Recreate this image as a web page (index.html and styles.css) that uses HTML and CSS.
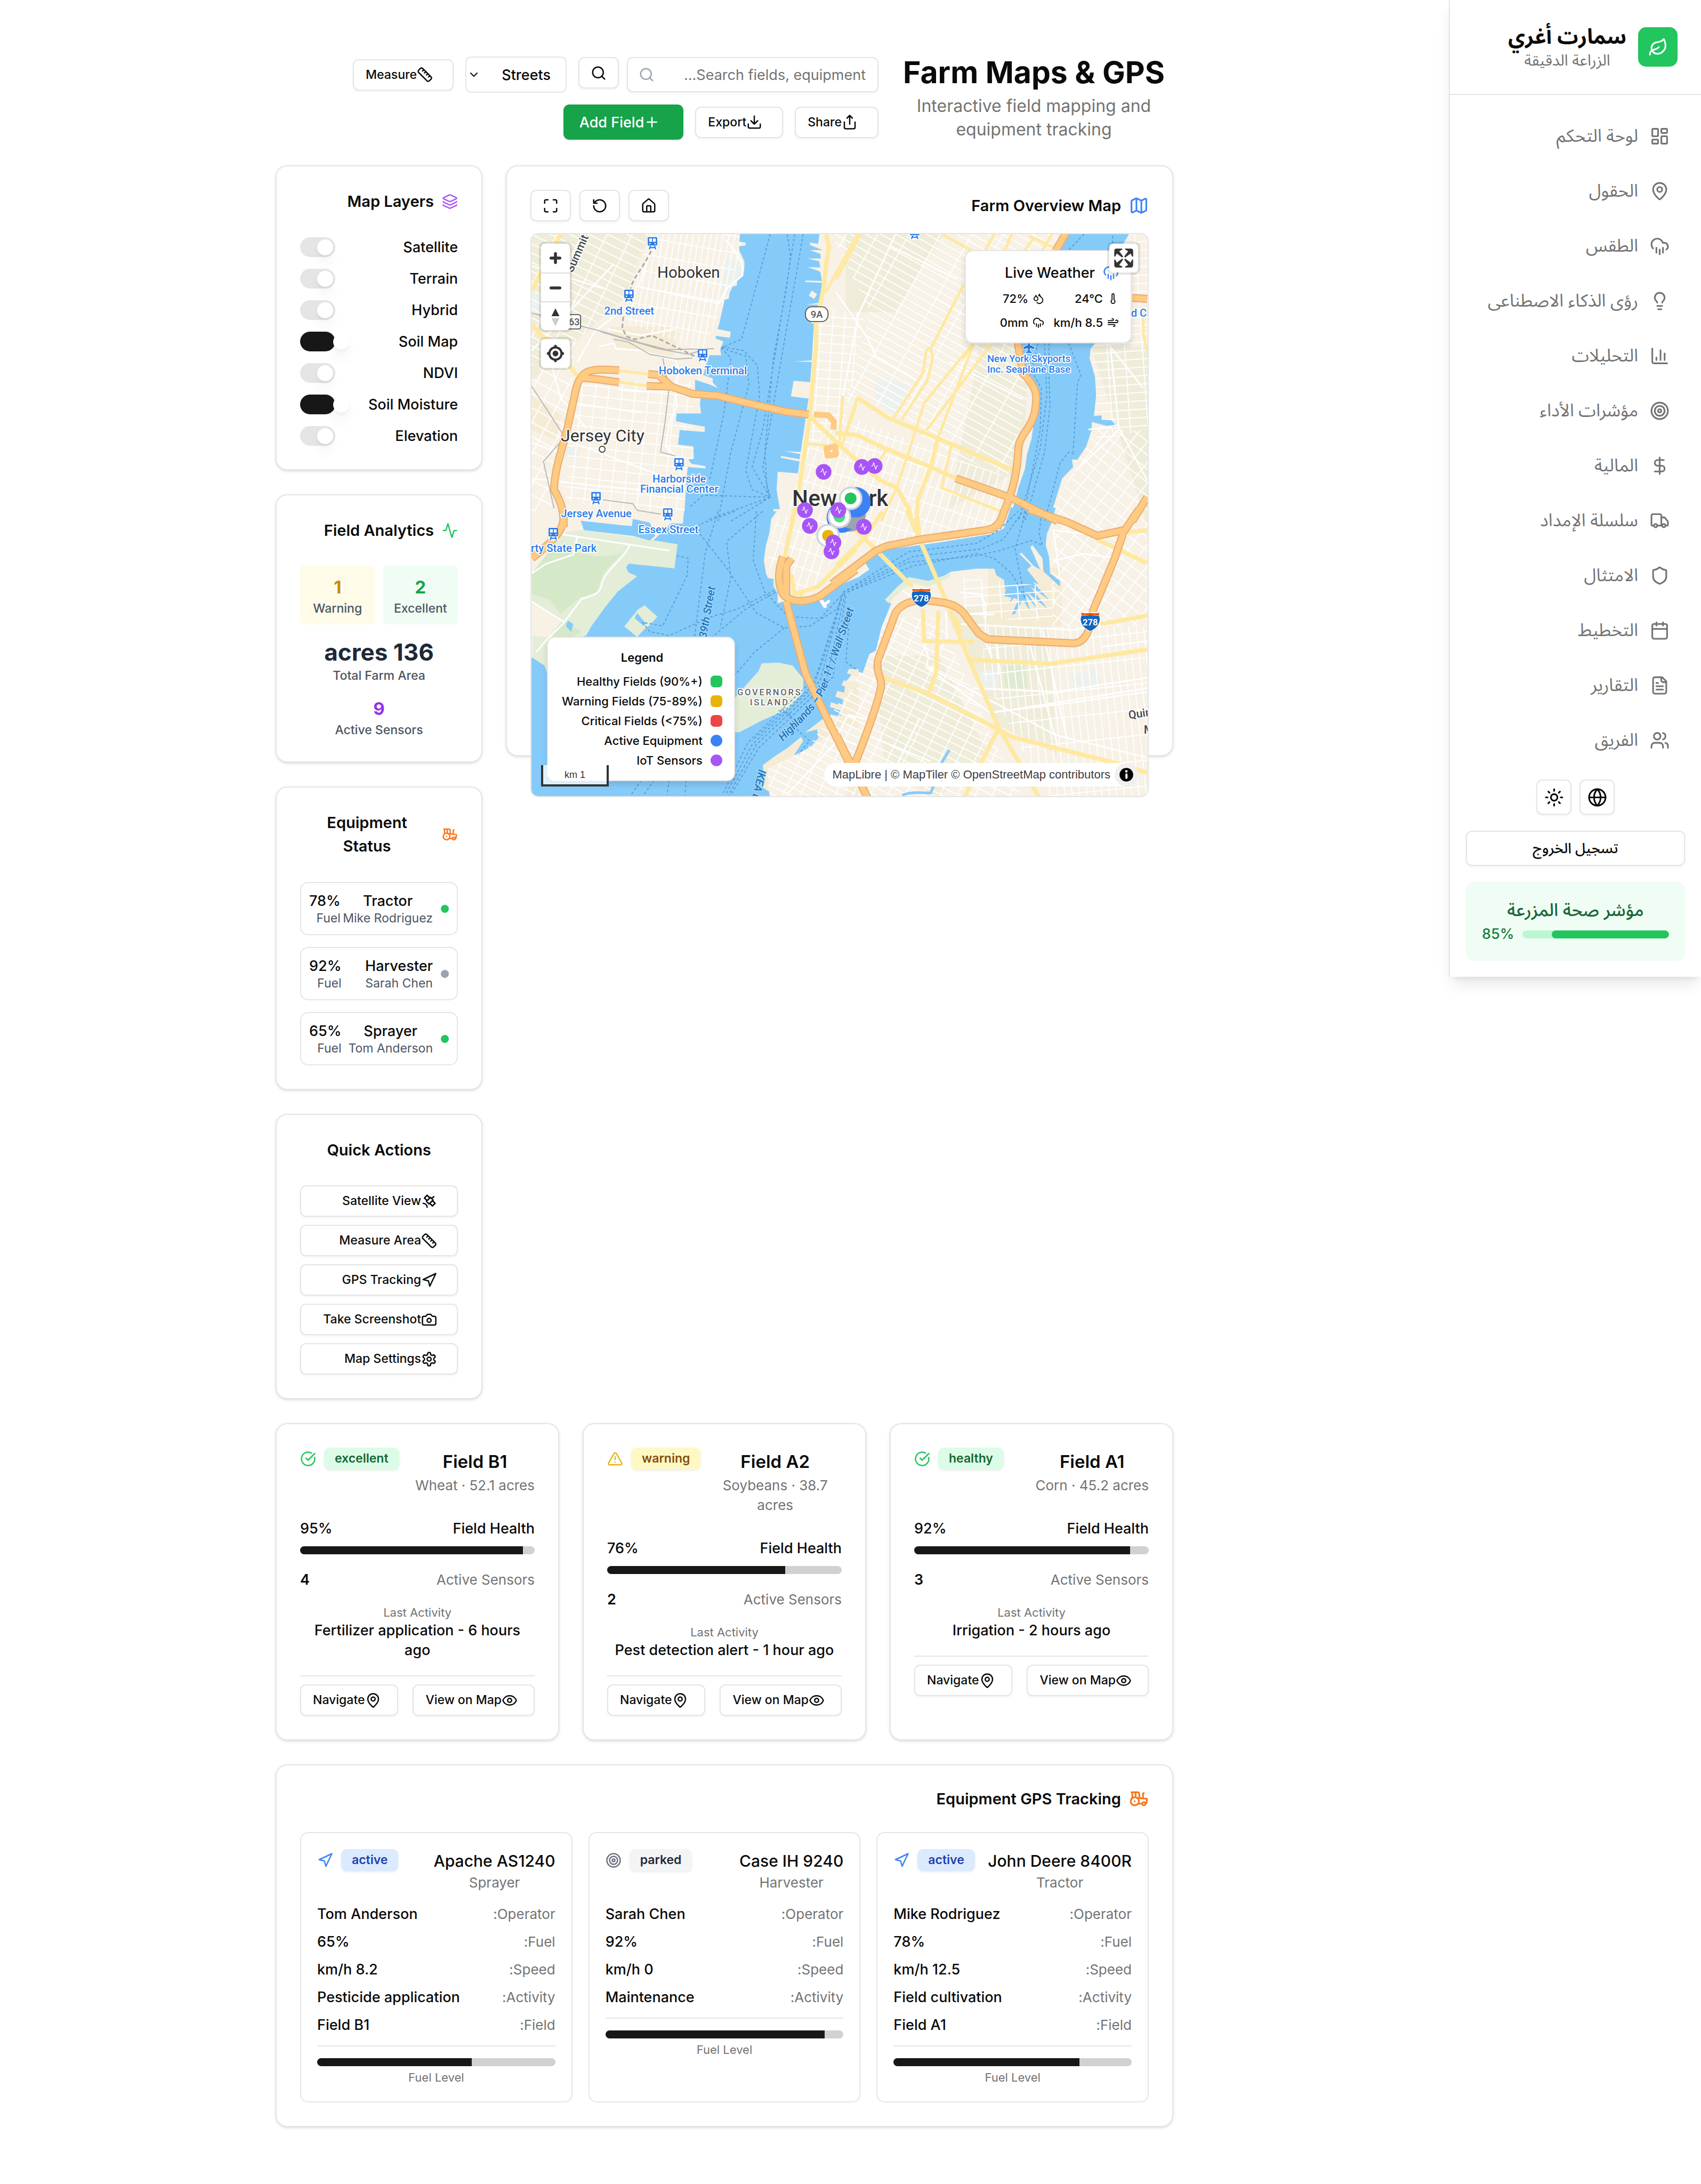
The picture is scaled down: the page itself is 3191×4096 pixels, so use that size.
FILE: index.html
```html
<!DOCTYPE html>
<html lang="ar" dir="rtl">
<head>
<meta charset="utf-8">
<title>Farm Maps &amp; GPS</title>
<link rel="stylesheet" href="styles.css">
</head>
<body>
<svg class="sprite" aria-hidden="true">
  <symbol id="leaf" viewBox="0 0 24 24"><path d="M11 20A7 7 0 0 1 9.8 6.1C15.5 5 17 4.48 19 2c1 2 2 4.18 2 8 0 5.5-4.78 10-10 10Z"/><path d="M2 21c0-3 1.85-5.36 5.08-6C9.5 14.52 12 13 13 12"/></symbol>
  <symbol id="dashboard" viewBox="0 0 24 24"><rect x="3" y="3" width="7" height="9" rx="1"/><rect x="14" y="3" width="7" height="5" rx="1"/><rect x="14" y="12" width="7" height="9" rx="1"/><rect x="3" y="16" width="7" height="5" rx="1"/></symbol>
  <symbol id="pin" viewBox="0 0 24 24"><path d="M20 10c0 4.993-5.539 10.193-7.399 11.799a1 1 0 0 1-1.202 0C9.539 20.193 4 14.993 4 10a8 8 0 0 1 16 0"/><circle cx="12" cy="10" r="3"/></symbol>
  <symbol id="rain" viewBox="0 0 24 24"><path d="M4 14.899A7 7 0 1 1 15.71 8h1.79a4.5 4.5 0 0 1 2.5 8.242M16 14v6M8 14v6M12 16v6"/></symbol>
  <symbol id="bulb" viewBox="0 0 24 24"><path d="M15 14c.2-1 .7-1.7 1.5-2.5 1-.9 1.5-2.2 1.5-3.5A6 6 0 0 0 6 8c0 1 .2 2.2 1.5 3.5.7.7 1.3 1.5 1.5 2.5M9 18h6M10 22h4"/></symbol>
  <symbol id="chart" viewBox="0 0 24 24"><path d="M3 3v16a2 2 0 0 0 2 2h16M18 17V9M13 17V5M8 17v-3"/></symbol>
  <symbol id="target" viewBox="0 0 24 24"><circle cx="12" cy="12" r="10"/><circle cx="12" cy="12" r="6"/><circle cx="12" cy="12" r="2"/></symbol>
  <symbol id="dollar" viewBox="0 0 24 24"><path d="M12 2v20M17 5H9.5a3.5 3.5 0 0 0 0 7h5a3.5 3.5 0 0 1 0 7H6"/></symbol>
  <symbol id="truck" viewBox="0 0 24 24"><path d="M14 18V6a2 2 0 0 0-2-2H4a2 2 0 0 0-2 2v11a1 1 0 0 0 1 1h2M15 18H9M19 18h2a1 1 0 0 0 1-1v-3.65a1 1 0 0 0-.22-.624l-3.48-4.35A1 1 0 0 0 17.52 8H14"/><circle cx="17" cy="18" r="2"/><circle cx="7" cy="18" r="2"/></symbol>
  <symbol id="shield" viewBox="0 0 24 24"><path d="M20 13c0 5-3.5 7.5-7.66 8.95a1 1 0 0 1-.67-.01C7.5 20.5 4 18 4 13V6a1 1 0 0 1 1-1c2 0 4.5-1.2 6.24-2.72a1.17 1.17 0 0 1 1.52 0C14.51 3.81 17 5 19 5a1 1 0 0 1 1 1z"/></symbol>
  <symbol id="calendar" viewBox="0 0 24 24"><path d="M8 2v4M16 2v4M3 10h18"/><rect x="3" y="4" width="18" height="18" rx="2"/></symbol>
  <symbol id="file" viewBox="0 0 24 24"><path d="M15 2H6a2 2 0 0 0-2 2v16a2 2 0 0 0 2 2h12a2 2 0 0 0 2-2V7ZM14 2v4a2 2 0 0 0 2 2h4M10 9H8M16 13H8M16 17H8"/></symbol>
  <symbol id="users" viewBox="0 0 24 24"><path d="M16 21v-2a4 4 0 0 0-4-4H6a4 4 0 0 0-4 4v2M22 21v-2a4 4 0 0 0-3-3.87M16 3.13a4 4 0 0 1 0 7.75"/><circle cx="9" cy="7" r="4"/></symbol>
  <symbol id="sun" viewBox="0 0 24 24"><circle cx="12" cy="12" r="4"/><path d="M12 2v2M12 20v2m-7.07-17.07 1.41 1.41m11.32 11.32 1.41 1.41M2 12h2m16 0h2M6.34 17.66l-1.41 1.41M19.07 4.93l-1.41 1.41"/></symbol>
  <symbol id="globe" viewBox="0 0 24 24"><circle cx="12" cy="12" r="10"/><path d="M12 2a14.5 14.5 0 0 0 0 20 14.5 14.5 0 0 0 0-20M2 12h20"/></symbol>
  <symbol id="search" viewBox="0 0 24 24"><circle cx="11" cy="11" r="8"/><path d="m21 21-4.3-4.3"/></symbol>
  <symbol id="chevron" viewBox="0 0 24 24"><path d="m6 9 6 6 6-6"/></symbol>
  <symbol id="ruler" viewBox="0 0 24 24"><path d="M21.3 15.3a2.4 2.4 0 0 1 0 3.4l-2.6 2.6a2.4 2.4 0 0 1-3.4 0L2.7 8.7a2.41 2.41 0 0 1 0-3.4l2.6-2.6a2.41 2.41 0 0 1 3.4 0ZM14.5 12.5l2-2M11.5 9.5l2-2M8.5 6.5l2-2M17.5 15.5l2-2"/></symbol>
  <symbol id="share" viewBox="0 0 24 24"><path d="M12 2v13M16 6l-4-4-4 4M4 12v8a2 2 0 0 0 2 2h12a2 2 0 0 0 2-2v-8"/></symbol>
  <symbol id="download" viewBox="0 0 24 24"><path d="M12 15V3M21 15v4a2 2 0 0 1-2 2H5a2 2 0 0 1-2-2v-4M7 10l5 5 5-5"/></symbol>
  <symbol id="plus" viewBox="0 0 24 24"><path d="M5 12h14M12 5v14"/></symbol>
  <symbol id="home" viewBox="0 0 24 24"><path d="M15 21v-8a1 1 0 0 0-1-1h-4a1 1 0 0 0-1 1v8M3 10a2 2 0 0 1 .709-1.528l7-5.999a2 2 0 0 1 2.582 0l7 5.999A2 2 0 0 1 21 10v9a2 2 0 0 1-2 2H5a2 2 0 0 1-2-2z"/></symbol>
  <symbol id="reset" viewBox="0 0 24 24"><path d="M3 12a9 9 0 1 0 9-9 9.75 9.75 0 0 0-6.74 2.74L3 8M3 3v5h5"/></symbol>
  <symbol id="maximize" viewBox="0 0 24 24"><path d="M8 3H5a2 2 0 0 0-2 2v3M21 8V5a2 2 0 0 0-2-2h-3M3 16v3a2 2 0 0 0 2 2h3M16 21h3a2 2 0 0 0 2-2v-3"/></symbol>
  <symbol id="map" viewBox="0 0 24 24"><path d="M14.106 5.553a2 2 0 0 0 1.788 0l3.659-1.83A1 1 0 0 1 21 4.619v12.764a1 1 0 0 1-.553.894l-4.553 2.277a2 2 0 0 1-1.788 0l-4.212-2.106a2 2 0 0 0-1.788 0l-3.659 1.83A1 1 0 0 1 3 19.381V6.618a1 1 0 0 1 .553-.894l4.553-2.277a2 2 0 0 1 1.788 0zM15 5.764v15M9 3.236v15"/></symbol>
  <symbol id="layers" viewBox="0 0 24 24"><path d="M12.83 2.18a2 2 0 0 0-1.66 0L2.6 6.08a1 1 0 0 0 0 1.83l8.58 3.91a2 2 0 0 0 1.66 0l8.58-3.9a1 1 0 0 0 0-1.83zM2 12a1 1 0 0 0 .58.91l8.6 3.91a2 2 0 0 0 1.65 0l8.58-3.9A1 1 0 0 0 22 12M2 17a1 1 0 0 0 .58.91l8.6 3.91a2 2 0 0 0 1.65 0l8.58-3.9A1 1 0 0 0 22 17"/></symbol>
  <symbol id="activity" viewBox="0 0 24 24"><path d="M22 12h-2.48a2 2 0 0 0-1.93 1.46l-2.35 8.36a.25.25 0 0 1-.48 0L9.24 2.18a.25.25 0 0 0-.48 0l-2.35 8.36A2 2 0 0 1 4.49 12H2"/></symbol>
  <symbol id="tractor" viewBox="0 0 24 24"><path d="m10 11 11 .9a1 1 0 0 1 .8 1.1l-.665 4.158a1 1 0 0 1-.988.842H20M16 18h-5M18 5a1 1 0 0 0-1 1v5.573M3 4h8.129a1 1 0 0 1 .99.863L13 11.246M4 11V4M7 15h.01M8 10.1V4"/><circle cx="18" cy="18" r="2"/><circle cx="7" cy="15" r="5"/></symbol>
  <symbol id="satellite" viewBox="0 0 24 24"><path d="M13 7 9 3 5 7l4 4M17 11l4 4-4 4-4-4M8 12l4 4 6-6-4-4ZM16 8l3-3M9 21a6 6 0 0 0-6-6"/></symbol>
  <symbol id="nav" viewBox="0 0 24 24"><path d="M3 11 22 2l-9 19-2-8z"/></symbol>
  <symbol id="camera" viewBox="0 0 24 24"><path d="M14.5 4h-5L7 7H4a2 2 0 0 0-2 2v9a2 2 0 0 0 2 2h16a2 2 0 0 0 2-2V9a2 2 0 0 0-2-2h-3z"/><circle cx="12" cy="13" r="3"/></symbol>
  <symbol id="gear" viewBox="0 0 24 24"><path d="M12.22 2h-.44a2 2 0 0 0-2 2v.18a2 2 0 0 1-1 1.73l-.43.25a2 2 0 0 1-2 0l-.15-.08a2 2 0 0 0-2.73.73l-.22.38a2 2 0 0 0 .73 2.73l.15.1a2 2 0 0 1 1 1.72v.51a2 2 0 0 1-1 1.74l-.15.09a2 2 0 0 0-.73 2.73l.22.38a2 2 0 0 0 2.73.73l.15-.08a2 2 0 0 1 2 0l.43.25a2 2 0 0 1 1 1.73V20a2 2 0 0 0 2 2h.44a2 2 0 0 0 2-2v-.18a2 2 0 0 1 1-1.73l.43-.25a2 2 0 0 1 2 0l.15.08a2 2 0 0 0 2.73-.73l.22-.39a2 2 0 0 0-.73-2.73l-.15-.08a2 2 0 0 1-1-1.74v-.5a2 2 0 0 1 1-1.74l.15-.09a2 2 0 0 0 .73-2.73l-.22-.38a2 2 0 0 0-2.73-.73l-.15.08a2 2 0 0 1-2 0l-.43-.25a2 2 0 0 1-1-1.73V4a2 2 0 0 0-2-2z"/><circle cx="12" cy="12" r="3"/></symbol>
  <symbol id="check" viewBox="0 0 24 24"><path d="M21.801 10A10 10 0 1 1 17 3.335M9 11l3 3L22 4"/></symbol>
  <symbol id="alert" viewBox="0 0 24 24"><path d="m21.73 18-8-14a2 2 0 0 0-3.48 0l-8 14A2 2 0 0 0 4 21h16a2 2 0 0 0 1.73-3M12 9v4M12 17h.01"/></symbol>
  <symbol id="eye" viewBox="0 0 24 24"><path d="M2.062 12.348a1 1 0 0 1 0-.696 10.75 10.75 0 0 1 19.876 0 1 1 0 0 1 0 .696 10.75 10.75 0 0 1-19.876 0"/><circle cx="12" cy="12" r="3"/></symbol>
  <symbol id="thermo" viewBox="0 0 24 24"><path d="M14 4v10.54a4 4 0 1 1-4 0V4a2 2 0 0 1 4 0Z"/></symbol>
  <symbol id="drops" viewBox="0 0 24 24"><path d="M7 16.3c2.2 0 4-1.83 4-4.05 0-1.16-.57-2.26-1.71-3.19S7.29 6.75 7 5.3c-.29 1.45-1.14 2.84-2.29 3.76S3 11.1 3 12.25c0 2.22 1.8 4.05 4 4.05zM12.56 6.6A10.97 10.97 0 0 0 14 3.02c.5 2.5 2 4.9 4 6.5s3 3.5 3 5.5a6.98 6.98 0 0 1-11.91 4.97"/></symbol>
  <symbol id="wind" viewBox="0 0 24 24"><path d="M12.8 19.6A2 2 0 1 0 14 16H2M17.5 8a2.5 2.5 0 1 1 2 4H2M9.8 4.4A2 2 0 1 1 11 8H2"/></symbol>
  <symbol id="train" viewBox="0 0 24 30"><path class="halo" d="M3 1h18v19l2 9H1l2-9z"/><path class="rail" fill-rule="evenodd" d="M4 2h16a2 2 0 0 1 2 2v14a2 2 0 0 1-2 2H4a2 2 0 0 1-2-2V4a2 2 0 0 1 2-2zm1 3v7h6V5zm8 0v7h6V5zM6.500 14.500a1.500 1.500 0 1 0 .1 0zm11 0a1.500 1.500 0 1 0 .1 0zM6 21h3l-.6 2h7.200l-.6-2h3l2 7h-2.500l-.8-2.500H7.300L6.500 28H4z"/></symbol>
  <symbol id="interstate" viewBox="0 0 42 42"><path d="M5 1q8 2 16 0 8 2 16 0 5 7 4 17-1 16-20 23Q2 34 1 18 0 8 5 1z" fill="#fff"/><path d="M3 9q18-2 36 0 2 6 1 10-2 14-19 21Q4 33 2 19 1 15 3 9z" fill="#1565c0"/><path d="M3 3q9 2 18 0 9 2 18 0v5q-9-1-18 0-9-1-18 0z" fill="#e65100"/></symbol>
</svg>

<div class="app">
<aside class="sidebar">
  <div class="brand">
    <span class="logo"><svg class="icon md"><use href="#leaf"/></svg></span>
    <div class="brand-text"><h2>سمارت أغري</h2><p>الزراعة الدقيقة</p></div>
  </div>
  <nav class="menu">
    <a href="#"><svg class="icon md"><use href="#dashboard"/></svg>لوحة التحكم</a>
    <a href="#"><svg class="icon md"><use href="#pin"/></svg>الحقول</a>
    <a href="#"><svg class="icon md"><use href="#rain"/></svg>الطقس</a>
    <a href="#"><svg class="icon md"><use href="#bulb"/></svg>رؤى الذكاء الاصطناعى</a>
    <a href="#"><svg class="icon md"><use href="#chart"/></svg>التحليلات</a>
    <a href="#"><svg class="icon md"><use href="#target"/></svg>مؤشرات الأداء</a>
    <a href="#"><svg class="icon md"><use href="#dollar"/></svg>المالية</a>
    <a href="#"><svg class="icon md"><use href="#truck"/></svg>سلسلة الإمداد</a>
    <a href="#"><svg class="icon md"><use href="#shield"/></svg>الامتثال</a>
    <a href="#"><svg class="icon md"><use href="#calendar"/></svg>التخطيط</a>
    <a href="#"><svg class="icon md"><use href="#file"/></svg>التقارير</a>
    <a href="#"><svg class="icon md"><use href="#users"/></svg>الفريق</a>
  </nav>
  <div class="side-foot">
    <div class="side-tools">
      <button class="btn square" aria-label="Language"><svg class="icon md"><use href="#globe"/></svg></button>
      <button class="btn square" aria-label="Theme"><svg class="icon md"><use href="#sun"/></svg></button>
    </div>
    <button class="btn logout">تسجيل الخروج</button>
    <div class="health">
      <p>مؤشر صحة المزرعة</p>
      <div class="health-row"><div class="track green"><div class="fill" style="width:80%"></div></div><span>85%</span></div>
    </div>
  </div>
</aside>

<main class="main">
  <header class="page-head">
    <div class="page-title"><h1>Farm Maps &amp; GPS</h1><p>Interactive field mapping and equipment tracking</p></div>
    <div class="controls">
      <div class="search-group">
        <div class="search"><input type="text" aria-label="Search fields, equipment" placeholder="Search fields, equipment..."><svg class="icon"><use href="#search"/></svg></div>
        <button class="btn small tool" aria-label="Search"><svg class="icon"><use href="#search"/></svg></button>
      </div>
      <div class="select"><select aria-label="Map style"><option>Streets</option><option>Satellite</option></select><svg class="icon"><use href="#chevron"/></svg></div>
      <button class="btn small lead"><svg class="icon"><use href="#ruler"/></svg>Measure</button>
      <button class="btn small lead"><svg class="icon"><use href="#share"/></svg>Share</button>
      <button class="btn small lead"><svg class="icon"><use href="#download"/></svg>Export</button>
      <button class="btn primary"><svg class="icon"><use href="#plus"/></svg>Add Field</button>
    </div>
  </header>

  <div class="overview">
    <section class="card map-card">
      <div class="map-head">
        <h3 class="card-title"><svg class="icon md blue"><use href="#map"/></svg>Farm Overview Map</h3>
        <div class="map-tools">
          <button class="btn small tool" aria-label="Home"><svg class="icon"><use href="#home"/></svg></button>
          <button class="btn small tool" aria-label="Reset"><svg class="icon"><use href="#reset"/></svg></button>
          <button class="btn small tool" aria-label="Full screen"><svg class="icon"><use href="#maximize"/></svg></button>
        </div>
      </div>
      <div class="map">
        <svg class="canvas" viewBox="0 0 1255 1146" preserveAspectRatio="xMidYMid slice" role="img" aria-label="Map of New York">
          <defs>
            <pattern id="p-heights" width="46" height="17" patternUnits="userSpaceOnUse" patternTransform="rotate(26)"><path class="st" d="M0 1H46M1 0V17"/></pattern>
            <pattern id="p-hoboken" width="12" height="34" patternUnits="userSpaceOnUse" patternTransform="rotate(10)"><path class="st" d="M0 1H12M1 0V34"/></pattern>
            <pattern id="p-jersey" width="27" height="21" patternUnits="userSpaceOnUse" patternTransform="rotate(6)"><path class="st" d="M0 1H27M1 0V21"/></pattern>
            <pattern id="p-jersey2" width="30" height="26" patternUnits="userSpaceOnUse" patternTransform="rotate(28)"><path class="st" d="M0 1H30M1 0V26"/></pattern>
            <pattern id="p-village" width="24" height="18" patternUnits="userSpaceOnUse" patternTransform="rotate(4)"><path class="st" d="M0 1H24M1 0V18"/></pattern>
            <pattern id="p-mid" width="56" height="15" patternUnits="userSpaceOnUse" patternTransform="rotate(29)"><path class="st" d="M0 1H56M1 0V15"/></pattern>
            <pattern id="p-les" width="16" height="34" patternUnits="userSpaceOnUse" patternTransform="rotate(18)"><path class="st" d="M0 1H16M1 0V34"/></pattern>
            <pattern id="p-wburg" width="26" height="22" patternUnits="userSpaceOnUse" patternTransform="rotate(38)"><path class="st" d="M0 1H26M1 0V22"/></pattern>
            <pattern id="p-bk" width="15" height="52" patternUnits="userSpaceOnUse" patternTransform="rotate(-6)"><path class="st" d="M0 1H15M1 0V52"/></pattern>
            <pattern id="p-slope" width="32" height="15" patternUnits="userSpaceOnUse" patternTransform="rotate(26)"><path class="st" d="M0 1H32M1 0V15"/></pattern>
            <pattern id="p-green" width="36" height="17" patternUnits="userSpaceOnUse" patternTransform="rotate(-4)"><path class="st" d="M0 1H36M1 0V17"/></pattern>
            <g id="motorways">
              <path transform="matrix(.4337 0 0 .3827 -19 -14.5)" d="M455 765C380 760 320 755 290 785 265 820 260 830 250 880L215 1060C190 1180 150 1300 150 1400 190 1480 195 1520 195 1600M265 805C320 805 390 820 455 828M592 785L640 790 700 850M585 848L700 852 800 890 920 900 1100 950 1240 985 1345 1000"/>
              <path transform="matrix(.4464 0 0 .3827 621 -14.5)" d="M1050 30L1000 130M825 600L850 780C925 870 915 900 905 990 885 1080 835 1110 830 1180 825 1330 800 1430 735 1600M545 1340L800 1445 1010 1568M1418 1440L1350 1568M1418 385L1350 380"/>
              <path transform="matrix(.4337 0 0 .3827 -19 565.5)" d="M1568 310L1400 450C1340 485 1260 490 1225 440 1200 380 1200 320 1225 240M1240 460L1240 290 1265 250M1240 480L1330 860 1440 1120 1580 1440M195 0C200 80 180 130 45 250"/>
              <path transform="matrix(.4464 0 0 .3827 621 565.5)" d="M880-10L1060 60 1190 130 1310 100M1380-10L1310 110 1270 250 1170 530C1160 640 1130 702 1080 702L690 680 650 650 580 540C540 490 500 485 420 475 340 465 290 500 270 540L190 790C180 850 200 870 205 920 200 980 150 1150 85 1340M0 1190L60 1330 145 1530M765-10C760 60 720 95 680 100L380 150 230 185 180 210-20 385"/>
            </g>
          </defs>
          <rect width="1255" height="1146" fill="#f7f1e6"/>
          <path fill="#efecd9" d="M0 0H240L190 130 100 210 0 300zM640 0H840L740 160 640 160zM930 90H1010L1010 290 1000 480 850 560 900 300zM1140 230H1255V600L1200 420zM840 760H1050L1070 1060 950 1000zM700 860H830L930 1060 830 1146 720 1100z"/>
          <path fill="#f5ecd6" d="M160 190H300L290 250 170 230zM0 330L60 370 50 420 0 400zM930 680H1080V800H930zM560 960L640 900 660 1000 540 1050z"/>
          <path fill="#ecf1ee" d="M395 50L430 60 425 110 385 130zM700 290L770 310 740 370 700 340zM910 890H950V930H920zM1100 900L1150 885 1160 920 1105 935zM0 120H20V160L0 165zM60 430L100 440 90 460 60 450z"/>
          <path fill="#e0ead2" d="M960 880H1005L1010 925 965 925z"/>
          <path fill="url(#p-heights)" d="M0 0H240L190 130 100 210 0 270z"/>
          <path fill="url(#p-hoboken)" d="M240 0H430L410 100 370 190 350 240 190 180z"/>
          <path fill="url(#p-jersey)" d="M80 300H330V560L260 590 70 540z"/>
          <path fill="url(#p-jersey2)" d="M0 290L90 210 80 330 40 560 90 620 0 720z"/>
          <path fill="url(#p-village)" d="M580 150L680 160 640 380 560 440z"/>
          <path fill="url(#p-mid)" d="M610 0H1090L1000 160 1010 330 970 500 640 340 690 160z"/>
          <path fill="url(#p-les)" d="M640 370L980 500 930 640 700 640 640 620 520 750 490 680 520 560 560 440z"/>
          <path fill="url(#p-wburg)" d="M1060 560L1150 400 1255 400V800H1060z"/>
          <path fill="url(#p-green)" d="M1130 0H1255V400L1150 420z"/>
          <path fill="url(#p-bk)" d="M920 800H1255V1146H1050L920 900z"/>
          <path fill="url(#p-slope)" d="M690 780H830L950 1050 1000 1146H500L560 1070 640 1000z"/>

          <g transform="matrix(.4337 0 0 .3827 -19 -14.5)">
            <path class="water" d="M1024 30L1020 80 1050 86 1048 102 1018 104 1020 130 1030 150 1044 188 1043 230 1030 270 1010 290 1008 315 990 318 975 350 970 385 950 390 945 420 925 520 918 545 980 560 975 592 910 582 908 595 945 612 930 655 935 685 880 684 850 790 895 808 895 830 920 860 880 840 812 815 812 880 840 905 835 940 840 995 725 995 722 1035 760 1045 858 1065 857 1093 740 1083 732 1160 804 1170 806 1235 780 1240 795 1262 862 1275 860 1287 778 1280 772 1340 765 1470 758 1600H1175L1185 1560 1180 1503 1210 1503 1195 1400 1200 1305 1295 1313 1303 1250 1215 1230 1215 1220 1303 1238 1306 1210 1230 1195 1308 1200 1325 1070 1345 915 1262 903 1275 820 1352 828 1360 720 1278 718 1360 712 1362 676 1370 515 1356 515 1395 415 1335 415 1398 405 1408 300 1330 295 1330 287 1408 290 1400 240 1340 215 1400 218 1395 185 1340 170 1403 170 1400 145 1350 125 1410 125 1352 98 1352 85 1390 92 1397 30z"/>
            <path class="pier" d="M1360 340L1385 360 1372 385 1346 368z"/>
          </g>
          <g transform="matrix(.4464 0 0 .3827 621 -14.5)">
            <path class="water" d="M1060 30L1000 130 830 615 850 780 890 850 920 900 905 1010 890 1130 870 1210 860 1290 830 1390 820 1440 780 1600H930L985 1510 1030 1340 1080 1280 1075 1240 1100 1240 1140 1170 1165 1080 1165 1040 1265 1070 1270 1050 1255 1030 1210 1028 1210 1005 1175 1008 1185 900 1180 800 1165 740 1155 700 1160 650 1185 615 1260 300 1310 90 1340 30z"/>
          </g>
          <g transform="matrix(.4464 0 0 .3827 621 565.5)">
            <path class="water" d="M795-20L765 90 710 120 470 165 200 208 130 270 150 310 100 350 0 400-300 500-700 400V1600H-100L-60 1300-20 1150 20 1090 50 840 120 860 150 760 180 740 205 620 250 490 222 470 280 400 330 350 420 370 480 350 525 320 640 305 720 305 730 340 765 365 770 420 785 365 765 450 800 460 785 495 810 460 830 470 800 550 815 545 850 470 885 530 860 440 930 540 870 430 965 520 885 400 975 475 895 375 925 390 870 310 890 290 835 225 845 220 900 290 930 310 885 190 895 180 940 250 945 320 1020 400 1020 370 975 330 970 240 955 180 960 120 985 50 1000-20z"/>
            <path fill="#e4edd8" d="M280 400L330 350 420 370 520 330 520 350 420 400 340 380 260 460 240 490 222 470z"/>
          </g>
          <g transform="matrix(.4337 0 0 .3827 -19 565.5)">
            <path class="water" d="M0 800L300 660 480 300 760 0H1200V500L1500 480 1568 500V840L1120 1460 1160 1580H0z"/>
            <path fill="#e4edd8" d="M45 330L180 110 290 100 600 150 730 175 715 303 500 278 488 300 500 325 540 345 450 425 390 510 290 665 120 870 105 820 50 780z"/>
            <path fill="#d5e8c8" d="M45 250L180 200 340 240 420 235 470 220 380 330 350 430 270 460 180 545 130 470 45 440zM190 580L280 640 200 690 140 660z"/>
            <path class="pier" d="M45 475L190 580 120 670 45 660zM45 0H760L755 65 600 60 585 130 500 50 275 50 260 90 190 120 45 330z"/>
            <path class="water" d="M275 50L480 75 515 78 520 40 600 60 625 130 600 155 520 130 290 100zM215 580L240 600 230 640 205 610z"/>
            <path fill="#e4edd8" d="M480 612L545 520 575 500 635 560 600 605 575 625 540 668z"/>
            <path class="water" d="M540 540L528 568 570 610 582 596z"/>
            <path fill="#e4edd8" d="M1000 990L1110 850 1125 808 1205 805 1270 820 1320 890 1320 960 1250 1050 1130 1110 1020 1175 1000 1175z"/>
            <path class="pier" d="M1195 0L1170 40 1160 120 1145 180 1135 260 1145 330 1155 355 1185 360 1200 420 1240 480 1310 500 1400 465 1568 330V60L1280-10z"/>
            <path fill="#e4edd8" d="M1180 360H1235L1270 450 1280 495 1220 470 1180 400z"/>
            <path fill="#fff" d="M1395 475L1410 468 1422 485 1440 468 1448 480 1428 498 1432 510 1418 515z"/>
            <path fill="#f5ecd6" d="M1580 840L1535 838 1525 860 1580 885V910L1510 900 1500 925 1558 950 1550 975 1480 955 1470 985 1530 1010 1520 1040 1450 1015 1445 1040 1495 1060 1495 1090 1440 1080 1330 1175 1385 1160 1392 1205 1320 1300 1300 1320 1275 1300 1320 1220 1310 1200 1245 1260 1190 1300 1130 1350 1135 1400 1120 1460 1170 1500 1160 1580H1580z"/>
          </g>
          <path fill="#f7f1e6" d="M480 1090L560 1050 640 1000 680 1010 640 1146H485z"/>
          <path fill="url(#p-slope)" d="M480 1090L560 1050 630 950 690 900 660 1146H485z"/>
          <path fill="url(#p-les)" d="M500 575L640 570 660 600 560 740 530 720 490 690 480 660z"/>
          <path fill="url(#p-green)" d="M880 700L1070 720 1060 790 880 780z"/>

          <g class="ferry" transform="matrix(.4337 0 0 .3827 -19 -14.5)">
            <path d="M1165 40L1060 480 1030 600 935 645M1245 40L1260 160 1240 340 1180 700 1140 1200 1150 1400 1165 1440M1280 40L1200 600 1130 1080 1080 1280 1165 1440M1320 40L1230 620 1160 1080 1130 1280 1165 1440M935 645L980 700 950 980 880 1350M935 645L1050 690 1065 840 980 1200 920 1568M940 640L1040 660 1105 740 1115 900 1050 1300 1080 1400 1165 1440M1165 1440L850 1430 790 1490M1165 1440L980 1568M1165 1440L870 1560"/>
          </g>
          <g class="ferry" transform="matrix(.4337 0 0 .3827 -19 565.5)">
            <path d="M920 0L860 220 810 665M1000 0L830 70 835 120 960 300 1100 540 1230 620 1350 610 1480 520 1505 440M1100 0L1085 260 1140 430 1250 560 1400 570 1505 440M1130 0L960 160 980 350 930 620M1185 420L1010 520 890 560 790 610 690 660 600 640 565 590M725 235L780 250 775 340 660 610 565 590M1230 620L1090 750 1000 870M1190 430L1050 520 895 665M1505 440L1380 880 1060 1230 940 1510M1505 440L1400 900 1080 1240 955 1510M1515 440L1430 890 1100 1240 970 1510M1520 450L1460 880 1110 1260 980 1510M1505 440L1410 800 1370 920 1080 1220M1540 520L1520 800 1568 840M560 1430L510 1510M690 1430L680 1510M770 1430L765 1510M620 1430L570 1510M1205 1060L1260 1080 1280 1150 1350 1220 1300 1290M1220 1050L1270 1100"/>
          </g>
          <g class="ferry" transform="matrix(.4464 0 0 .3827 621 565.500)">
            <path d="M30 430L330 215 640 170 740 100 830 0M30 430L350 240 660 200 760 150 850 0M30 440L330 270 620 240 740 210 890 155 940 180 925 120 935 20M30 440L350 290 640 225 720 250 800 330 860 460M865 0L815 200 860 460"/>
          </g>
          <g class="ferry" transform="matrix(.4464 0 0 .3827 621 -14.500)">
            <path d="M1130 40L1060 125M1260 50V125M920 620L890 770 935 860 930 1080 850 1568M950 620L960 900 930 1180 830 1568M970 620V820L975 950 950 1200 860 1568M1060 620L1115 790 1100 830 1080 1200M1085 1210L1060 1200 1020 1260 950 1568"/>
          </g>

          <g class="lanes" transform="matrix(.4337 0 0 .3827 -19 -14.5)">
            <path d="M955 70C1020 150 1040 200 1035 260L960 330 925 410 545 320M545 320L600 150M45 210L380 330M240 430L430 200M45 660L240 430M260 720L340 560 440 470M360 640L430 620 440 650 560 660 640 690 720 710 735 760 720 880 725 960 690 1050 675 1170 720 1220M45 1150L190 1210M215 1140L640 1320M240 940L560 990M120 660L180 910 300 1070M45 1340L350 1380 740 1420M400 545L560 580 720 545M455 870L600 880 720 870 800 890"/>
          </g>
          <g class="lanes" transform="matrix(.4464 0 0 .3827 621 -14.5)">
            <path d="M270 40L100 470 30 900M0 350L140 590 180 690 370 820M240 100L550 280M450 380L830 640M515 720L850 920M1400 860L1250 640 1290 1080 1100 1290M1280 1050L1418 1350M1150 1080L1270 1060"/>
          </g>
          <g class="lanes" transform="matrix(.4464 0 0 .3827 621 565.500)">
            <path d="M990 100L1130 120M1000 260L1130 225 1280 250M990 100L1020 350 1160 520M560 430L660 440 680 500V600M570 600L1080 630 1260 600M680 500L680 690 710 780M560 545L720 548M300 420L380 480M400 700L420 780 410 830 700 1070M720 1070L1418 940M620 940L1000 960 1418 885M700 1070L1060 1020 1418 960M420 830L1000 1190 1418 1310M140 1190L430 1330M880 700L1010 1250M730 700L740 870M940 630L1050 1200M1210 720L1418 690M50 1090L10 1180M50 1080L150 1110 200 980M230 1460L380 1100M500 530L505 700"/>
          </g>
          <g class="lanes" transform="matrix(.4337 0 0 .3827 -19 565.500)">
            <path d="M185 122L690 208M505 180C480 250 400 300 375 380 370 440 330 450 280 465L190 600 110 690 65 750M45 330L110 280 240 230 260 130M45 480L200 590M1490 1210L1240 1510M1490 1210L1568 1240M1530 1090L1568 1100"/>
          </g>
          <g class="track-line" transform="matrix(.4337 0 0 .3827 -19 -14.5)">
            <path d="M45 460L380 560 560 620 680 655 900 650M370 560L640 650 780 680 840 660M660 700L690 860 670 1050 650 1200 720 1220M45 850L200 1120 100 1250 150 1500M380 1455L520 1475 540 1510 650 1530M430 600L500 615 600 680 720 705 800 700"/>
            <path class="metro" d="M605 130C570 220 520 270 510 330M475 480L470 540 490 585 530 600 610 580 720 640 810 690"/>
          </g>

          <g class="yl" transform="matrix(.4337 0 0 .3827 -19 -14.5)">
            <path d="M1425 40C1445 90 1440 130 1430 180L1415 330 1380 520V640L1350 1010 1320 1250 1300 1400 1265 1590M1350 1010L1440 1110 1568 1240M45 525L110 600 265 800M180 40L45 340"/>
            <path class="thin" d="M1425 350L1580 30M1505 900L1490 1150M1568 950L1500 1170M1340 1155L1430 1165M1470 1095L1568 1110M455 768L600 785M455 828L590 848"/>
          </g>
          <g class="yl" transform="matrix(.4464 0 0 .3827 621 -14.5)">
            <path d="M95 910L240 1020 470 1130 690 1240 760 1275 830 1295M0 1100L95 1110 230 1185 430 1280 545 1340M0 1150L200 1350 275 1390 330 1500 345 1568M465 1120L430 1280 370 1460 365 1600"/>
            <path class="thin" d="M110 40L0 280M580 310L435 640 410 660 395 780 260 1020M430 650L440 700 415 820 295 1030M625 620L400 940 360 1090 275 1390 205 1568M710 620L410 1085M630 610L580 700M640 580L465 1120M30 905L15 1100M95 910L40 1110M525 1160L480 1390 750 1515M720 40L680 125M480 40L620 130M880 50L990 110M800 40L770 125M900 60L860 125M985 40L940 125M1400 490V570L1418 660M230 1185L200 1240"/>
          </g>
          <g class="yl" transform="matrix(.4337 0 0 .3827 -19 565.500)">
            <path d="M1280-10L1230 260M1195 340L1265 345 1280 440 1390 400 1568 200M1310 440L1325 485"/>
          </g>
          <g class="yl" transform="matrix(.4464 0 0 .3827 621 565.500)">
            <path d="M320-10L380 150 510 500 570 690 740 1150 930 1530M365-10L380 130M190 215L345 400M80 90L190 215M210 0L130 140 0 290M395 520L400 690 630 695M465 530L455 860 420 970M205 880L420 970 740 1160 800 1200 1260 1335 1418 1390M735 1165L660 1340 580 1530M610 790L980 810 1418 735M1190 150L1418 275M1330 110L1418 100M1205 600L1418 555M540 560L570 640"/>
          </g>
          <g class="creek"><path d="M851 1051L835 1078M755 1143C780 1135 800 1139 813 1139L820 1122"/></g>

          <use href="#motorways" class="hw-case"/>
          <use href="#motorways" class="hw"/>
          <path class="hw" d="M601 437L618 433 620 450 603 452zM575 368L605 370 616 383 615 399"/>

          <use href="#train" x="235" y="5" width="23" height="29"/><use href="#train" x="187" y="112" width="23" height="29"/>
          <use href="#train" x="337" y="233" width="23" height="29"/><use href="#train" x="289" y="455" width="23" height="29"/>
          <use href="#train" x="120" y="524" width="23" height="29"/><use href="#train" x="266" y="557" width="23" height="29"/>
          <use href="#train" x="33" y="597" width="23" height="29"/><use href="#train" x="769" y="-16" width="23" height="29"/>
          <path class="rail plane" d="M1011 220h4v7l9 4v4l-9-2v6l4 2v2h-12v-2l4-2v-6l-9 2v-4l9-4z"/>
          <use href="#interstate" x="773" y="720" width="42" height="42"/><use href="#interstate" x="1117" y="769" width="42" height="42"/>
          <rect x="558" y="149" width="46" height="30" rx="13" fill="#fff" stroke="#555" stroke-width="2"/>
          <rect x="64" y="165" width="36" height="29" rx="4" fill="#fff" stroke="#555" stroke-width="2"/>
          <circle cx="144" cy="439" r="6" fill="#fff" stroke="#444" stroke-width="2"/>

          <g class="city">
            <text x="320" y="90" font-size="32" text-anchor="middle" fill="#111">Hoboken</text>
            <text x="145" y="423" font-size="35" text-anchor="middle">Jersey City</text>
            <text x="531" y="555" font-size="46" class="big">New York</text>
          </g>
          <g class="stop">
            <text x="199" y="165">2nd Street</text><text x="349" y="286">Hoboken Terminal</text>
            <text x="301" y="507">Harborside</text><text x="301" y="527">Financial Center</text>
            <text x="132" y="577">Jersey Avenue</text><text x="279" y="610">Essex Street</text>
            <text x="45" y="648">Liberty State Park</text>
            <text class="fine" x="1013" y="261">New York Skyports</text><text class="fine" x="1013" y="283">Inc. Seaplane Base</text>
            <text class="left" x="1221" y="169">d City</text>
          </g>
          <g class="ref">
            <text x="581" y="171">9A</text><text x="87" y="187">63</text>
            <text class="shield" x="794" y="749">278</text><text class="shield" x="1138" y="798">278</text>
          </g>
          <g class="place">
            <text x="485" y="940">GOVERNORS</text><text x="485" y="961">ISLAND</text>
          </g>
          <g class="road">
            <text transform="translate(84 80) rotate(-66)">Summit Avenue</text>
            <text transform="translate(1217 988) rotate(-8)">Quincy Street</text><text x="1247" y="1018">M</text>
          </g>
          <path id="ferry-route" fill="none" d="M512 1034C560 985 590 960 604 916L664 744"/>
          <g class="route">
            <text transform="translate(356 824) rotate(-80)">39th Street</text>
            <text><textPath href="#ferry-route">Highlands – Pier 11 / Wall Street</textPath></text>
            <text transform="translate(463 1090) rotate(103)">IKEA Express</text>
          </g>

          <g class="pins">
            <circle cx="648" cy="577" r="30" fill="#9ca3af"/><circle cx="632" cy="578" r="31" fill="#3b82f6"/><circle cx="652" cy="572" r="29" fill="#9ca3af"/><circle cx="660" cy="547" r="31" fill="#3b82f6"/>
            <g class="ring"><circle cx="627" cy="576" r="22" /><circle cx="604" cy="615" r="22"/><circle cx="650" cy="539" r="22"/></g>
            <circle cx="627" cy="576" r="12" fill="#4ade80"/><circle cx="604" cy="615" r="12" fill="#eab308"/><circle cx="650" cy="539" r="12" fill="#22c55e"/>
            <g fill="#a855f7"><circle cx="595" cy="485" r="16"/><circle cx="673" cy="475" r="16"/><circle cx="699" cy="473" r="16"/><circle cx="557" cy="563" r="16"/><circle cx="625" cy="563" r="16"/><circle cx="567" cy="595" r="16"/><circle cx="677" cy="597" r="16"/><circle cx="615" cy="629" r="16"/><circle cx="611" cy="647" r="16"/></g>
            <g class="pulse"><use href="#activity" x="587" y="477" width="16" height="16"/><use href="#activity" x="665" y="467" width="16" height="16"/><use href="#activity" x="691" y="465" width="16" height="16"/><use href="#activity" x="549" y="555" width="16" height="16"/><use href="#activity" x="617" y="555" width="16" height="16"/><use href="#activity" x="559" y="587" width="16" height="16"/><use href="#activity" x="669" y="589" width="16" height="16"/><use href="#activity" x="607" y="621" width="16" height="16"/><use href="#activity" x="603" y="639" width="16" height="16"/></g>
          </g>
        </svg>

        <div class="panel weather">
          <h4><svg class="icon blue"><use href="#rain"/></svg>Live Weather</h4>
          <ul>
            <li><svg class="icon sm"><use href="#thermo"/></svg>24°C</li><li><svg class="icon sm"><use href="#drops"/></svg>72%</li>
            <li><svg class="icon sm"><use href="#wind"/></svg>8.5 km/h</li><li><svg class="icon sm"><use href="#rain"/></svg>0mm</li>
          </ul>
        </div>
        <div class="panel legend">
          <h4>Legend</h4>
          <ul>
            <li><i class="sw ok"></i>Healthy Fields (90%+)</li>
            <li><i class="sw warn"></i>Warning Fields (75-89%)</li>
            <li><i class="sw bad"></i>Critical Fields (&lt;75%)</li>
            <li><i class="sw equip"></i>Active Equipment</li>
            <li><i class="sw iot"></i>IoT Sensors</li>
          </ul>
        </div>
        <div class="ctrl zoomer">
          <button aria-label="Zoom in"><svg viewBox="0 0 29 29"><path d="M14.500 8.500c-.75 0-1.500.75-1.500 1.500v3h-3c-.75 0-1.500.75-1.500 1.500S9.250 16 10 16h3v3c0 .75.75 1.500 1.500 1.500S16 19.750 16 19v-3h3c.75 0 1.500-.75 1.500-1.500S19.750 13 19 13h-3v-3c0-.75-.75-1.500-1.500-1.500z"/></svg></button>
          <button aria-label="Zoom out"><svg viewBox="0 0 29 29"><path d="M10 13c-.75 0-1.500.75-1.500 1.500S9.250 16 10 16h9c.75 0 1.500-.75 1.500-1.500S19.750 13 19 13z"/></svg></button>
          <button aria-label="Reset north"><svg viewBox="0 0 29 29"><path d="M10.500 14l4-8 4 8z"/><path d="M10.500 16l4 8 4-8z" fill="#ccc"/></svg></button>
        </div>
        <div class="ctrl locate"><button aria-label="My location"><svg viewBox="0 0 20 20"><path fill-rule="evenodd" d="M10 4C9 4 9 5 9 5v.1A5 5 0 0 0 5.100 9H5s-1 0-1 1 1 1 1 1h.1A5 5 0 0 0 9 14.900v.1s0 1 1 1 1-1 1-1v-.1a5 5 0 0 0 3.900-3.900h.1s1 0 1-1-1-1-1-1h-.1A5 5 0 0 0 11 5.100V5s0-1-1-1zm0 2.500a3.500 3.500 0 1 1 0 7 3.500 3.500 0 1 1 0-7z"/><circle cx="10" cy="10" r="2"/></svg></button></div>
        <div class="ctrl full"><button aria-label="Enter full screen"><svg viewBox="0 0 29 29"><path d="M24 16v5.500c0 1.750-.75 2.500-2.500 2.500H16v-1l3-1.500-4-5.500 1-1 5.500 4 1.500-3zM6 16l1.500 3 5.500-4 1 1-4 5.500 3 1.500v1H7.500C5.750 24 5 23.250 5 21.500V16zm7-11v1l-3 1.500 4 5.500-1 1-5.500-4L6 13H5V7.500C5 5.750 5.750 5 7.500 5zm11 2.500c0-1.750-.75-2.500-2.500-2.500H16v1l3 1.500-4 5.500 1 1 5.500-4 1.500 3h1z"/></svg></button></div>
        <div class="scale">1 km</div>
        <div class="attrib"><svg viewBox="0 0 24 24"><circle cx="12" cy="12" r="12" fill="#f0f0f0"/><circle cx="12" cy="12" r="7"/><circle cx="12" cy="8.500" r="1.300" fill="#fff"/><rect x="11" y="10.700" width="2.200" height="5.500" rx="1" fill="#fff"/></svg><p><a href="#">MapLibre</a> | <a href="#">© MapTiler</a> <a href="#">© OpenStreetMap contributors</a></p></div>
      </div>
    </section>

    <div class="rail-col">
      <section class="card">
        <h3 class="card-title"><svg class="icon purple"><use href="#layers"/></svg>Map Layers</h3>
        <div class="switches">
          <div><label for="l1">Satellite</label><input type="checkbox" role="switch" id="l1"></div>
          <div><label for="l2">Terrain</label><input type="checkbox" role="switch" id="l2"></div>
          <div><label for="l3">Hybrid</label><input type="checkbox" role="switch" id="l3"></div>
          <div><label for="l4">Soil Map</label><input type="checkbox" role="switch" id="l4" checked></div>
          <div><label for="l5">NDVI</label><input type="checkbox" role="switch" id="l5"></div>
          <div><label for="l6">Soil Moisture</label><input type="checkbox" role="switch" id="l6" checked></div>
          <div><label for="l7">Elevation</label><input type="checkbox" role="switch" id="l7"></div>
        </div>
      </section>
      <section class="card">
        <h3 class="card-title"><svg class="icon green"><use href="#activity"/></svg>Field Analytics</h3>
        <div class="analytics">
          <div class="tiles">
            <div class="tile ok"><b>2</b><span>Excellent</span></div>
            <div class="tile warn"><b>1</b><span>Warning</span></div>
          </div>
          <div class="stat"><b class="large">136 acres</b><span>Total Farm Area</span></div>
          <div class="stat iot"><b>9</b><span>Active Sensors</span></div>
        </div>
      </section>
      <section class="card">
        <h3 class="card-title wide"><svg class="icon orange"><use href="#tractor"/></svg><span>Equipment Status</span></h3>
        <ul class="machines">
          <li><i class="dot on"></i><div class="who"><b>Tractor</b><span>Mike Rodriguez</span></div><div class="fuel"><b>78%</b><span>Fuel</span></div></li>
          <li><i class="dot"></i><div class="who"><b>Harvester</b><span>Sarah Chen</span></div><div class="fuel"><b>92%</b><span>Fuel</span></div></li>
          <li><i class="dot on"></i><div class="who"><b>Sprayer</b><span>Tom Anderson</span></div><div class="fuel"><b>65%</b><span>Fuel</span></div></li>
        </ul>
      </section>
      <section class="card">
        <h3 class="card-title center">Quick Actions</h3>
        <div class="actions">
          <button class="btn small lead"><svg class="icon"><use href="#satellite"/></svg>Satellite View</button>
          <button class="btn small lead"><svg class="icon"><use href="#ruler"/></svg>Measure Area</button>
          <button class="btn small lead"><svg class="icon"><use href="#nav"/></svg>GPS Tracking</button>
          <button class="btn small lead"><svg class="icon"><use href="#camera"/></svg>Take Screenshot</button>
          <button class="btn small lead"><svg class="icon"><use href="#gear"/></svg>Map Settings</button>
        </div>
      </section>
    </div>
  </div>

  <div class="fields">
    <article class="card field">
      <div class="field-head"><div class="name"><h3>Field A1</h3><p>Corn · 45.2 acres</p></div><div class="state"><span class="badge ok">healthy</span><svg class="icon green"><use href="#check"/></svg></div></div>
      <div class="pair"><span>Field Health</span><span>92%</span></div>
      <div class="track"><div class="fill" style="width:92%"></div></div>
      <div class="pair sensors"><span class="muted">Active Sensors</span><b>3</b></div>
      <div class="last"><span>Last Activity</span><b>Irrigation - 2 hours ago</b></div>
      <div class="field-foot"><button class="btn small snug"><svg class="icon"><use href="#eye"/></svg>View on Map</button><button class="btn small snug"><svg class="icon"><use href="#pin"/></svg>Navigate</button></div>
    </article>
    <article class="card field">
      <div class="field-head"><div class="name"><h3>Field A2</h3><p>Soybeans · 38.7 acres</p></div><div class="state"><span class="badge warn">warning</span><svg class="icon yellow"><use href="#alert"/></svg></div></div>
      <div class="pair"><span>Field Health</span><span>76%</span></div>
      <div class="track"><div class="fill" style="width:76%"></div></div>
      <div class="pair sensors"><span class="muted">Active Sensors</span><b>2</b></div>
      <div class="last"><span>Last Activity</span><b>Pest detection alert - 1 hour ago</b></div>
      <div class="field-foot"><button class="btn small snug"><svg class="icon"><use href="#eye"/></svg>View on Map</button><button class="btn small snug"><svg class="icon"><use href="#pin"/></svg>Navigate</button></div>
    </article>
    <article class="card field">
      <div class="field-head"><div class="name"><h3>Field B1</h3><p>Wheat · 52.1 acres</p></div><div class="state"><span class="badge ok">excellent</span><svg class="icon green"><use href="#check"/></svg></div></div>
      <div class="pair"><span>Field Health</span><span>95%</span></div>
      <div class="track"><div class="fill" style="width:95%"></div></div>
      <div class="pair sensors"><span class="muted">Active Sensors</span><b>4</b></div>
      <div class="last"><span>Last Activity</span><b>Fertilizer application - 6 hours ago</b></div>
      <div class="field-foot"><button class="btn small snug"><svg class="icon"><use href="#eye"/></svg>View on Map</button><button class="btn small snug"><svg class="icon"><use href="#pin"/></svg>Navigate</button></div>
    </article>
  </div>

  <section class="card tracking">
    <h3 class="card-title"><svg class="icon md orange"><use href="#tractor"/></svg>Equipment GPS Tracking</h3>
    <div class="units">
      <article class="unit">
        <div class="field-head"><div class="name"><h4>John Deere 8400R</h4><p>Tractor</p></div><div class="state"><span class="badge info">active</span><svg class="icon blue"><use href="#nav"/></svg></div></div>
        <dl><div><dt>Operator:</dt><dd>Mike Rodriguez</dd></div><div><dt>Fuel:</dt><dd>78%</dd></div><div><dt>Speed:</dt><dd>12.5 km/h</dd></div><div><dt>Activity:</dt><dd>Field cultivation</dd></div><div><dt>Field:</dt><dd>Field A1</dd></div></dl>
        <div class="level"><div class="track"><div class="fill" style="width:78%"></div></div><p>Fuel Level</p></div>
      </article>
      <article class="unit">
        <div class="field-head"><div class="name"><h4>Case IH 9240</h4><p>Harvester</p></div><div class="state"><span class="badge idle">parked</span><svg class="icon gray"><use href="#target"/></svg></div></div>
        <dl><div><dt>Operator:</dt><dd>Sarah Chen</dd></div><div><dt>Fuel:</dt><dd>92%</dd></div><div><dt>Speed:</dt><dd>0 km/h</dd></div><div><dt>Activity:</dt><dd>Maintenance</dd></div></dl>
        <div class="level"><div class="track"><div class="fill" style="width:92%"></div></div><p>Fuel Level</p></div>
      </article>
      <article class="unit">
        <div class="field-head"><div class="name"><h4>Apache AS1240</h4><p>Sprayer</p></div><div class="state"><span class="badge info">active</span><svg class="icon blue"><use href="#nav"/></svg></div></div>
        <dl><div><dt>Operator:</dt><dd>Tom Anderson</dd></div><div><dt>Fuel:</dt><dd>65%</dd></div><div><dt>Speed:</dt><dd>8.2 km/h</dd></div><div><dt>Activity:</dt><dd>Pesticide application</dd></div><div><dt>Field:</dt><dd>Field B1</dd></div></dl>
        <div class="level"><div class="track"><div class="fill" style="width:65%"></div></div><p>Fuel Level</p></div>
      </article>
    </div>
  </section>
</main>
</div>
</body>
</html>
```
FILE: styles.css
```css
* { box-sizing: border-box; margin: 0; padding: 0; }
:root {
  --ink: #0a0a0a;
  --muted: #737373;
  --slate: #4b5563;
  --line: #e5e5e5;
}
body {
  background: #fff;
  color: var(--ink);
  font: 500 27px/37px Inter, "DejaVu Sans", sans-serif;
}
button, input, select { font: inherit; color: inherit; }
a { color: inherit; text-decoration: none; }
ul { list-style: none; }
b { font-weight: 600; }
.sprite { position: absolute; width: 0; height: 0; }
.icon {
  width: 30px; height: 30px; flex: none;
  fill: none; stroke: currentColor; stroke-width: 2;
  stroke-linecap: round; stroke-linejoin: round;
}
.icon.md { width: 37px; height: 37px; }
.icon.sm { width: 22px; height: 22px; }
.blue { color: #3b82f6; }
.purple { color: #a855f7; }
.green { color: #22c55e; }
.orange { color: #f97316; }
.yellow { color: #eab308; }
.gray { color: #6b7280; }
.muted { color: var(--muted); }

.app { display: flex; align-items: flex-start; }

/* Sidebar */
.sidebar {
  width: 473px; flex: none;
  background: #fff;
  border-left: 2px solid var(--line);
  box-shadow: 0 18px 28px -6px rgb(0 0 0 / .1), 0 7px 11px -7px rgb(0 0 0 / .1);
  font-family: "Noto Sans Arabic", "DejaVu Sans", sans-serif;
}
.brand {
  display: flex; align-items: center; gap: 22px;
  padding: 44px;
  border-bottom: 2px solid var(--line);
}
.logo {
  width: 74px; height: 74px; flex: none;
  display: grid; place-items: center;
  background: #22c55e; color: #fff; border-radius: 15px;
}
.brand-text { text-align: center; }
.brand-text h2 { font-size: 39px; line-height: 51px; font-weight: 700; }
.brand-text p { font-size: 29px; line-height: 37px; color: var(--muted); font-weight: 400; }
.menu { padding: 26px 30px 22px; }
.menu a {
  display: flex; align-items: center; gap: 22px;
  height: 103px; padding: 0 29px;
  color: var(--muted); font-size: 33px; font-weight: 400; white-space: nowrap;
}
.side-foot { display: grid; gap: 30px; padding: 0 30px 30px; }
.side-tools { display: flex; justify-content: center; gap: 15px; }
.btn {
  display: flex; align-items: center; justify-content: center;
  background: #fff; border: 2px solid var(--line); border-radius: 11px;
  box-shadow: 0 2px 4px rgb(0 0 0 / .05);
  font-weight: 500; white-space: nowrap;
}
.btn.square { width: 66px; height: 66px; }
.logout { height: 66px; }
.health { background: #f0fdf4; border-radius: 15px; padding: 30px; }
.health p { color: #166534; text-align: center; font-size: 33px; line-height: 48px; }
.health-row { display: flex; align-items: center; gap: 15px; }
.health-row span { color: #15803d; font: 500 27px/40px Inter, sans-serif; }
.track { height: 15px; border-radius: 8px; background: #d1d1d1; overflow: hidden; direction: ltr; }
.track .fill { height: 100%; background: #171717; }
.track.green { flex: 1; background: #bbf7d0; direction: rtl; }
.track.green .fill { background: #22c55e; border-radius: 8px; }

/* Page */
.main {
  flex: 1; min-width: 0; max-width: 1684px;
  margin: 0 auto; padding: 103px 0 104px;
  display: grid; gap: 45px;
}
.page-head { display: flex; align-items: center; gap: 30px; }
.page-title { flex: none; width: 523px; text-align: center; }
.page-title h1 { font-size: 57px; line-height: 66px; font-weight: 700; white-space: nowrap; }
.page-title p { margin-top: 8px; padding: 0 30px; font-size: 32px; line-height: 44px; font-weight: 400; color: var(--muted); }
.controls { display: flex; flex-wrap: wrap; align-items: center; gap: 22px; flex: 0 1 1000px; }
.search-group { display: flex; align-items: flex-start; gap: 15px; }
.search { position: relative; width: 472px; }
.search input {
  width: 100%; height: 66px; padding: 0 22px 0 66px;
  border: 2px solid var(--line); border-radius: 11px;
  background: #fff; font-weight: 400;
  box-shadow: 0 2px 4px rgb(0 0 0 / .05);
}
.search input::placeholder { color: var(--muted); opacity: 1; }
.search .icon { position: absolute; left: 22px; top: 18px; color: #9ca3af; }
.btn.small { height: 59px; padding: 0 22px; font-size: 23px; }
.btn.small.tool { width: 76px; }
.btn.small.lead { padding-right: 37px; justify-content: flex-start; }
.btn.small.snug { padding-right: 30px; }
.btn.primary {
  height: 66px; padding: 0 44px 0 30px;
  background: #16a34a; border: 0; color: #fff;
}
.select { position: relative; }
.select select {
  appearance: none; width: 190px; height: 68px; padding: 0 28px;
  border: 2px solid var(--line); border-radius: 11px; background: #fff;
}
.select .icon { position: absolute; left: 4px; top: 22px; width: 24px; height: 24px; }

.card {
  background: #fff; border: 2px solid var(--line); border-radius: 22px;
  padding: 44px;
  box-shadow: 0 2px 6px rgb(0 0 0 / .1), 0 2px 4px -2px rgb(0 0 0 / .1);
}
.card-title { display: flex; align-items: center; gap: 15px; font-size: 29px; line-height: 44px; font-weight: 600; }
.card-title.center { justify-content: center; }
.card-title.wide span { flex: 1; text-align: center; padding: 0 40px; }
.overview { display: grid; grid-template-columns: repeat(4, 1fr); gap: 44px; align-items: start; }
.map-card { grid-column: span 3; height: 1108px; }
.map-head { display: flex; justify-content: space-between; align-items: center; margin-bottom: 22px; }
.map-tools { display: flex; gap: 16px; }
.rail-col { display: grid; gap: 45px; }

/* Map */
.map {
  position: relative; height: 1058px; overflow: hidden;
  border: 2px solid var(--line); border-radius: 15px;
}
.canvas { display: block; width: 100%; height: 100%; direction: ltr; font-family: Roboto, sans-serif; }
.st { fill: none; stroke: #fff; stroke-width: 2; }
.water { fill: #85cbfa; }
.pier { fill: #f7f1e6; }
.canvas path { vector-effect: non-scaling-stroke; }
.ferry { fill: none; stroke: #5b9fd6; stroke-width: 2; stroke-dasharray: 5 4; }
.lanes { fill: none; stroke: #fff; stroke-width: 3; }
.track-line { fill: none; stroke: #b8b8b8; stroke-width: 2; }
.metro { stroke: #aaa; stroke-width: 3; stroke-dasharray: 8 5; }
.yl { fill: none; stroke: #ffe9a0; stroke-width: 8; stroke-linejoin: round; }
.yl .thin { stroke-width: 5; }
.creek { fill: none; stroke: #85cbfa; stroke-width: 5; }
.hw-case { fill: none; stroke: #e9ab72; stroke-width: 15; }
.hw { fill: none; stroke: #ffca81; stroke-width: 11; stroke-linejoin: round; }
.halo { fill: #fff; }
.rail { fill: #2b7be9; }
.plane { stroke: #fff; stroke-width: 2; paint-order: stroke; }
.canvas text { paint-order: stroke; stroke: #fff; stroke-width: 4; stroke-linejoin: round; }
.city text { fill: #333; font-weight: 400; }
.city .big { font-weight: 500; }
.stop { fill: #2b7be9; font-size: 22px; font-weight: 500; text-anchor: middle; }
.stop .fine { font-size: 20px; }
.stop .left { text-anchor: start; }
.ref { fill: #555; font-size: 20px; text-anchor: middle; }
.canvas .ref text { stroke: none; }
.ref .shield { fill: #fff; font-size: 18px; font-weight: 700; }
.place { fill: #666; font-size: 18px; text-anchor: middle; letter-spacing: 3px; }
.road { fill: #444; font-size: 23px; }
.route { fill: #1f74b8; font-size: 22px; font-style: italic; }
.canvas .route text { stroke: #a5d8fb; stroke-width: 3; }
.ring { fill: #fff; stroke: #d1d5db; stroke-width: 4; }
.pulse { fill: none; stroke: #fff; stroke-width: 2; }
.panel {
  position: absolute; background: #fff;
  border: 2px solid var(--line); border-radius: 15px; padding: 22px;
  box-shadow: 0 7px 12px rgb(0 0 0 / .12);
  font-size: 22px; line-height: 30px;
}
.weather { top: 30px; right: 30px; width: 313px; }
.weather h4 { display: flex; align-items: center; gap: 15px; font-size: 27px; line-height: 37px; font-weight: 500; }
.weather ul { display: grid; grid-template-columns: 1fr 1fr; gap: 15px; margin-top: 15px; }
.weather li { display: flex; align-items: center; gap: 8px; white-space: nowrap; }
.legend { left: 29px; bottom: 28px; padding-left: 26px; }
.legend h4 { text-align: center; font-size: 22px; font-weight: 600; }
.legend ul { display: grid; gap: 7px; margin-top: 15px; }
.legend li { display: flex; align-items: center; gap: 15px; }
.sw { width: 22px; height: 22px; border-radius: 7px; }
.sw.ok { background: #22c55e; }
.sw.warn { background: #eab308; }
.sw.bad { background: #ef4444; }
.sw.equip { background: #3b82f6; border-radius: 50%; }
.sw.iot { background: #a855f7; border-radius: 50%; }
.ctrl {
  position: absolute; width: 54px;
  background: #fff; border-radius: 7px; box-shadow: 0 0 0 4px rgb(0 0 0 / .1);
}
.ctrl button { display: grid; place-items: center; width: 54px; height: 54px; border: 0; background: none; }
.ctrl button + button { border-top: 2px solid #ddd; }
.ctrl svg { width: 54px; height: 54px; fill: #333; }
.zoomer { left: 18px; top: 18px; }
.locate { left: 18px; top: 197px; }
.full { right: 18px; top: 18px; }
.scale {
  position: absolute; left: 18px; bottom: 18px; width: 127px; height: 40px;
  border: 4px solid #333; border-top: 0; background: rgb(255 255 255 / .75);
  color: #333; text-align: center; font: 18px/36px "Liberation Sans", sans-serif;
}
.attrib {
  position: absolute; right: 18px; bottom: 18px; height: 44px;
  display: flex; align-items: center; gap: 8px; padding-left: 15px;
  background: #fff; border-radius: 22px;
  color: #404040; font: 22px/44px "Liberation Sans", sans-serif;
}
.attrib svg { width: 44px; height: 44px; }

/* Left column cards */
.switches { display: grid; gap: 22px; margin-top: 45px; }
.switches div { display: flex; justify-content: space-between; align-items: center; height: 37px; }
.switches input {
  appearance: none; width: 66px; height: 37px; padding: 4px;
  border-radius: 19px; background: #e5e5e5;
}
.switches input::before {
  content: ""; display: block; width: 30px; height: 30px; border-radius: 50%;
  background: #fff; box-shadow: 0 18px 26px -6px rgb(0 0 0 / .1), 0 4px 10px -3px rgb(0 0 0 / .1);
}
.switches input:checked { background: #171717; }
.switches input:checked::before { transform: translateX(30px); }
.analytics { display: grid; gap: 22px; margin-top: 44px; text-align: center; }
.analytics b, .analytics span { display: block; }
.tiles { display: grid; grid-template-columns: 1fr 1fr; gap: 15px; }
.tile { padding: 15px 0; border-radius: 7px; }
.tile b, .stat b { font-size: 33px; line-height: 51px; font-weight: 700; }
.tile span, .stat span { font-size: 23px; line-height: 29px; font-weight: 500; color: var(--slate); }
.tile.ok { background: #f0fdf4; }
.tile.ok b { color: #16a34a; }
.tile.warn { background: #fefce8; }
.tile.warn b { color: #ca8a04; }
.stat b.large { font-size: 44px; line-height: 60px; color: #1f2937; }
.stat.iot b { color: #9333ea; }
.machines { display: grid; gap: 22px; margin-top: 45px; }
.machines li {
  display: flex; align-items: center;
  border: 2px solid var(--line); border-radius: 15px; padding: 15px;
}
.machines b, .machines span { display: block; white-space: nowrap; }
.machines span { font-size: 23px; line-height: 29px; color: var(--slate); font-weight: 400; }
.dot { width: 15px; height: 15px; border-radius: 50%; background: #9ca3af; margin-left: 15px; flex: none; }
.dot.on { background: #22c55e; }
.who { text-align: center; }
.fuel { margin-right: auto; text-align: right; }
.machines b { font-weight: 500; }
.actions { display: grid; gap: 15px; margin-top: 44px; }

/* Field cards */
.fields { display: grid; grid-template-columns: repeat(3, 1fr); gap: 44px; }
.field-head { display: flex; justify-content: space-between; align-items: flex-start; gap: 15px; }
.name { text-align: center; }
.name h3 { font-size: 33px; line-height: 52px; font-weight: 600; }
.name h4 { font-size: 30px; line-height: 44px; font-weight: 500; white-space: nowrap; }
.name p { font-size: 26px; color: var(--muted); font-weight: 400; }
.state { display: flex; align-items: center; gap: 15px; flex: none; }
.badge {
  height: 41px; padding: 0 20px; border-radius: 11px;
  font-size: 23px; line-height: 40px; font-weight: 600;
  box-shadow: 0 2px 4px rgb(0 0 0 / .08);
}
.badge.ok { background: #dcfce7; color: #166534; }
.badge.warn { background: #fef9c3; color: #854d0e; }
.badge.info { background: #dbeafe; color: #1e40af; }
.badge.idle { background: #f3f4f6; color: #1f2937; }
.pair { display: flex; justify-content: space-between; }
.field-head + .pair { margin: 44px 0 15px; }
.sensors { margin-top: 29px; }
.pair .muted { font-size: 26px; font-weight: 400; }
.last { margin-top: 29px; text-align: center; }
.last span, .last b { display: block; }
.last span { font-size: 22px; line-height: 29px; color: var(--muted); font-weight: 400; }
.last b { font-weight: 500; }
.field-foot {
  display: flex; justify-content: space-between;
  margin-top: 29px; padding-top: 15px; border-top: 2px solid var(--line);
}

/* Equipment tracking */
.tracking .card-title { line-height: 37px; }
.units { display: grid; grid-template-columns: repeat(3, 1fr); gap: 30px; margin-top: 44px; }
.unit { border: 2px solid var(--line); border-radius: 15px; padding: 30px; }
.unit dl { display: grid; gap: 15px; margin-top: 22px; }
.unit dl div { display: flex; justify-content: space-between; }
.unit dt { font-size: 26px; color: var(--muted); font-weight: 400; }
.level { margin-top: 20px; padding-top: 22px; border-top: 2px solid var(--line); }
.level p { margin-top: 7px; text-align: center; font-size: 22px; line-height: 29px; color: var(--muted); font-weight: 400; }
```
